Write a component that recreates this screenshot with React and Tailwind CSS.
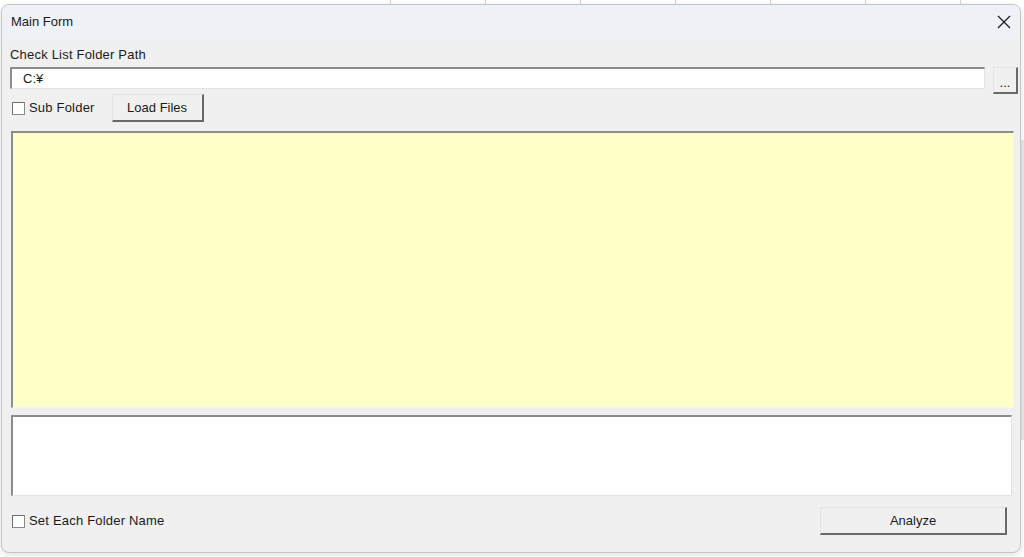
import React from 'react'

const font = { fontFamily: '"Liberation Sans", Arial, sans-serif' }

const Checkbox = ({ label }) => (
  <label className="flex items-center gap-[4px] text-[13px] text-[#1a1a1a]">
    <span className="w-[13px] h-[13px] bg-white border border-[#8a8a8a] border-t-[#6e6e6e] border-l-[#6e6e6e] shrink-0" />
    <span className="tracking-[0.2px]">{label}</span>
  </label>
)

const Button = ({ children, className = '' }) => (
  <button
    className={`bg-[#f0f0f0] border-t border-l border-[#e3e3e3] border-r-2 border-b-2 border-r-[#696969] border-b-[#696969] text-[13px] text-[#1a1a1a] flex items-center justify-center ${className}`}
  >
    {children}
  </button>
)

export default function App() {
  const gridXs = [390, 485, 580, 675, 770, 865, 960]
  return (
    <div className="relative w-[1024px] h-[557px] bg-white overflow-hidden" style={font}>
      {/* spreadsheet behind the dialog */}
      {gridXs.map(x => (
        <div key={x} className="absolute top-0 h-[6px] w-px bg-[#d4d4d4]" style={{ left: x }} />
      ))}
      <div className="absolute right-0 top-[140px] w-[3px] h-[300px] bg-[#e8e8e8]" />

      {/* dialog */}
      <div className="relative ml-[1px] mt-[4px] w-[1020px] h-[549px] rounded-[8px] border border-[#c4c4c4] bg-[#f0f0f0] overflow-hidden shadow-[0_2px_6px_rgba(0,0,0,0.12)] flex flex-col">
        <div className="h-[34px] shrink-0 bg-[#eef1f6] flex items-center justify-between pl-[9px] pr-[8px]">
          <span className="text-[13px] text-[#1a1a1a]">Main Form</span>
          <svg width="14" height="14" viewBox="0 0 14 14" className="mr-[1px]">
            <path d="M1 1L13 13M13 1L1 13" stroke="#1f1f1f" strokeWidth="1.3" />
          </svg>
        </div>

        <div className="flex-1 flex flex-col pt-[8px]">
          <div className="pl-[8px] h-[16px] text-[13px] leading-[16px] text-[#1a1a1a] tracking-[0.2px]">
            Check List Folder Path
          </div>

          <div className="flex items-start mt-[4px] pl-[8px] pr-[2px]">
            <div className="flex-1 h-[22px] bg-white border-t-2 border-l-2 border-[#8c8c8c] border-r border-b border-r-[#e3e3e3] border-b-[#e3e3e3] flex items-center pl-[11px] text-[13px] text-[#1a1a1a]">
              C:¥
            </div>
            <Button className="ml-[8px] w-[25px] h-[27px] text-[10px] leading-none pt-[4px]">...</Button>
          </div>

          <div className="flex items-center pl-[10px] h-[28px]">
            <Checkbox label="Sub Folder" />
            <Button className="ml-[17px] w-[92px] h-[28px]">Load Files</Button>
          </div>

          <div className="ml-[9px] mr-[6px] mt-[9px] h-[277px] bg-[#ffffc8] border-t-2 border-l-2 border-[#8c8c8c] border-r border-b border-r-[#f4f4f4] border-b-[#f4f4f4]" />

          <div className="ml-[9px] mr-[8px] mt-[7px] h-[81px] bg-white border-t-2 border-l-2 border-[#8c8c8c] border-r border-b border-r-[#e3e3e3] border-b-[#e3e3e3]" />

          <div className="flex items-center justify-between pl-[10px] pr-[13px] mt-[11px] h-[28px]">
            <Checkbox label="Set Each Folder Name" />
            <Button className="w-[187px] h-[28px]">Analyze</Button>
          </div>
        </div>
      </div>
    </div>
  )
}
